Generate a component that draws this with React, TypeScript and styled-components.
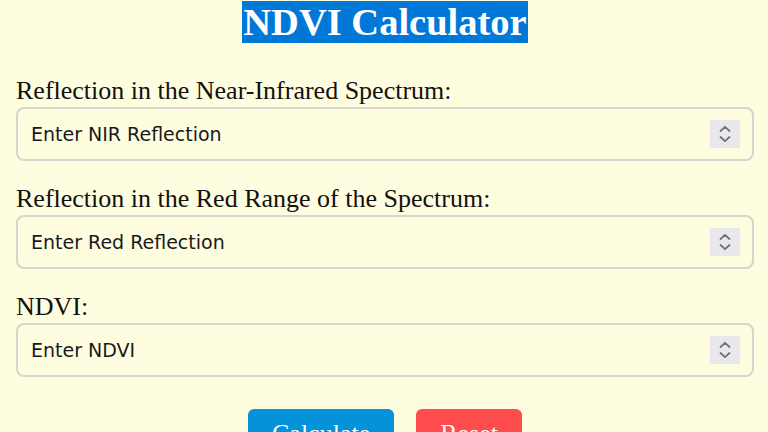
import React from 'react';
import styled, { createGlobalStyle } from 'styled-components';

const GlobalStyle = createGlobalStyle`
  html, body {
    margin: 0;
    padding: 0;
    background: #fffde0;
  }
  body {
    font-family: "Liberation Serif", "Times New Roman", serif;
    color: #111;
  }
`;

const Page = styled.div`
  padding: 0 14px 0 16px;
  display: flex;
  flex-direction: column;
`;

const Title = styled.h1`
  margin: 0 0 32px;
  text-align: center;
  font-size: 38.5px;
  line-height: 44px;
  font-weight: bold;
`;

const Highlight = styled.span`
  background: #0078d7;
  color: #fff;
  padding: 0 1px;
`;

const Field = styled.div`
  display: flex;
  flex-direction: column;
  margin-bottom: 23px;
`;

const Label = styled.label`
  font-size: 26px;
  line-height: 30px;
  margin-bottom: 1px;
  color: #111;
`;

const InputWrap = styled.div`
  position: relative;
`;

const Input = styled.input`
  box-sizing: border-box;
  width: 100%;
  height: 54px;
  border: 2px solid #d6d6cc;
  border-radius: 8px;
  background: transparent;
  padding: 0 50px 0 13px;
  font-family: "DejaVu Sans", Verdana, sans-serif;
  font-size: 19px;
  color: #111;
  outline: none;

  &::placeholder {
    color: #1a1a1a;
  }
`;

const Spinner = styled.div`
  position: absolute;
  right: 14px;
  top: 13px;
  width: 30px;
  height: 28px;
  background: #e9e8ee;
  display: flex;
  align-items: center;
  justify-content: center;
`;

const Buttons = styled.div`
  display: flex;
  justify-content: center;
  gap: 22px;
  margin-top: 9px;
`;

const Button = styled.button<{ $bg: string }>`
  background: ${(p) => p.$bg};
  color: #fff;
  border: none;
  border-radius: 6px;
  font-family: "Liberation Serif", serif;
  font-size: 26px;
  height: 50px;
  padding: 0 24px;
`;

function SpinIcon(): JSX.Element {
  return (
    <svg width="14" height="20" viewBox="0 0 14 20" fill="none" stroke="#707078" strokeWidth="1.8" strokeLinecap="round" strokeLinejoin="round">
      <path d="M2.5 7 L7 2.8 L11.5 7" />
      <path d="M2.5 13 L7 17.2 L11.5 13" />
    </svg>
  );
}

const fields = [
  { label: 'Reflection in the Near-Infrared Spectrum:', placeholder: 'Enter NIR Reflection' },
  { label: 'Reflection in the Red Range of the Spectrum:', placeholder: 'Enter Red Reflection' },
  { label: 'NDVI:', placeholder: 'Enter NDVI' },
];

export default function App(): JSX.Element {
  return (
    <>
      <GlobalStyle />
      <Page>
        <Title>
          <Highlight>NDVI Calculator</Highlight>
        </Title>
        {fields.map((f, i) => (
          <Field key={`field-${i}`}>
            <Label>{f.label}</Label>
            <InputWrap>
              <Input type="text" placeholder={f.placeholder} />
              <Spinner>
                <SpinIcon />
              </Spinner>
            </InputWrap>
          </Field>
        ))}
        <Buttons>
          <Button $bg="#0493d8">Calculate</Button>
          <Button $bg="#ff4d4d">Reset</Button>
        </Buttons>
      </Page>
    </>
  );
}
